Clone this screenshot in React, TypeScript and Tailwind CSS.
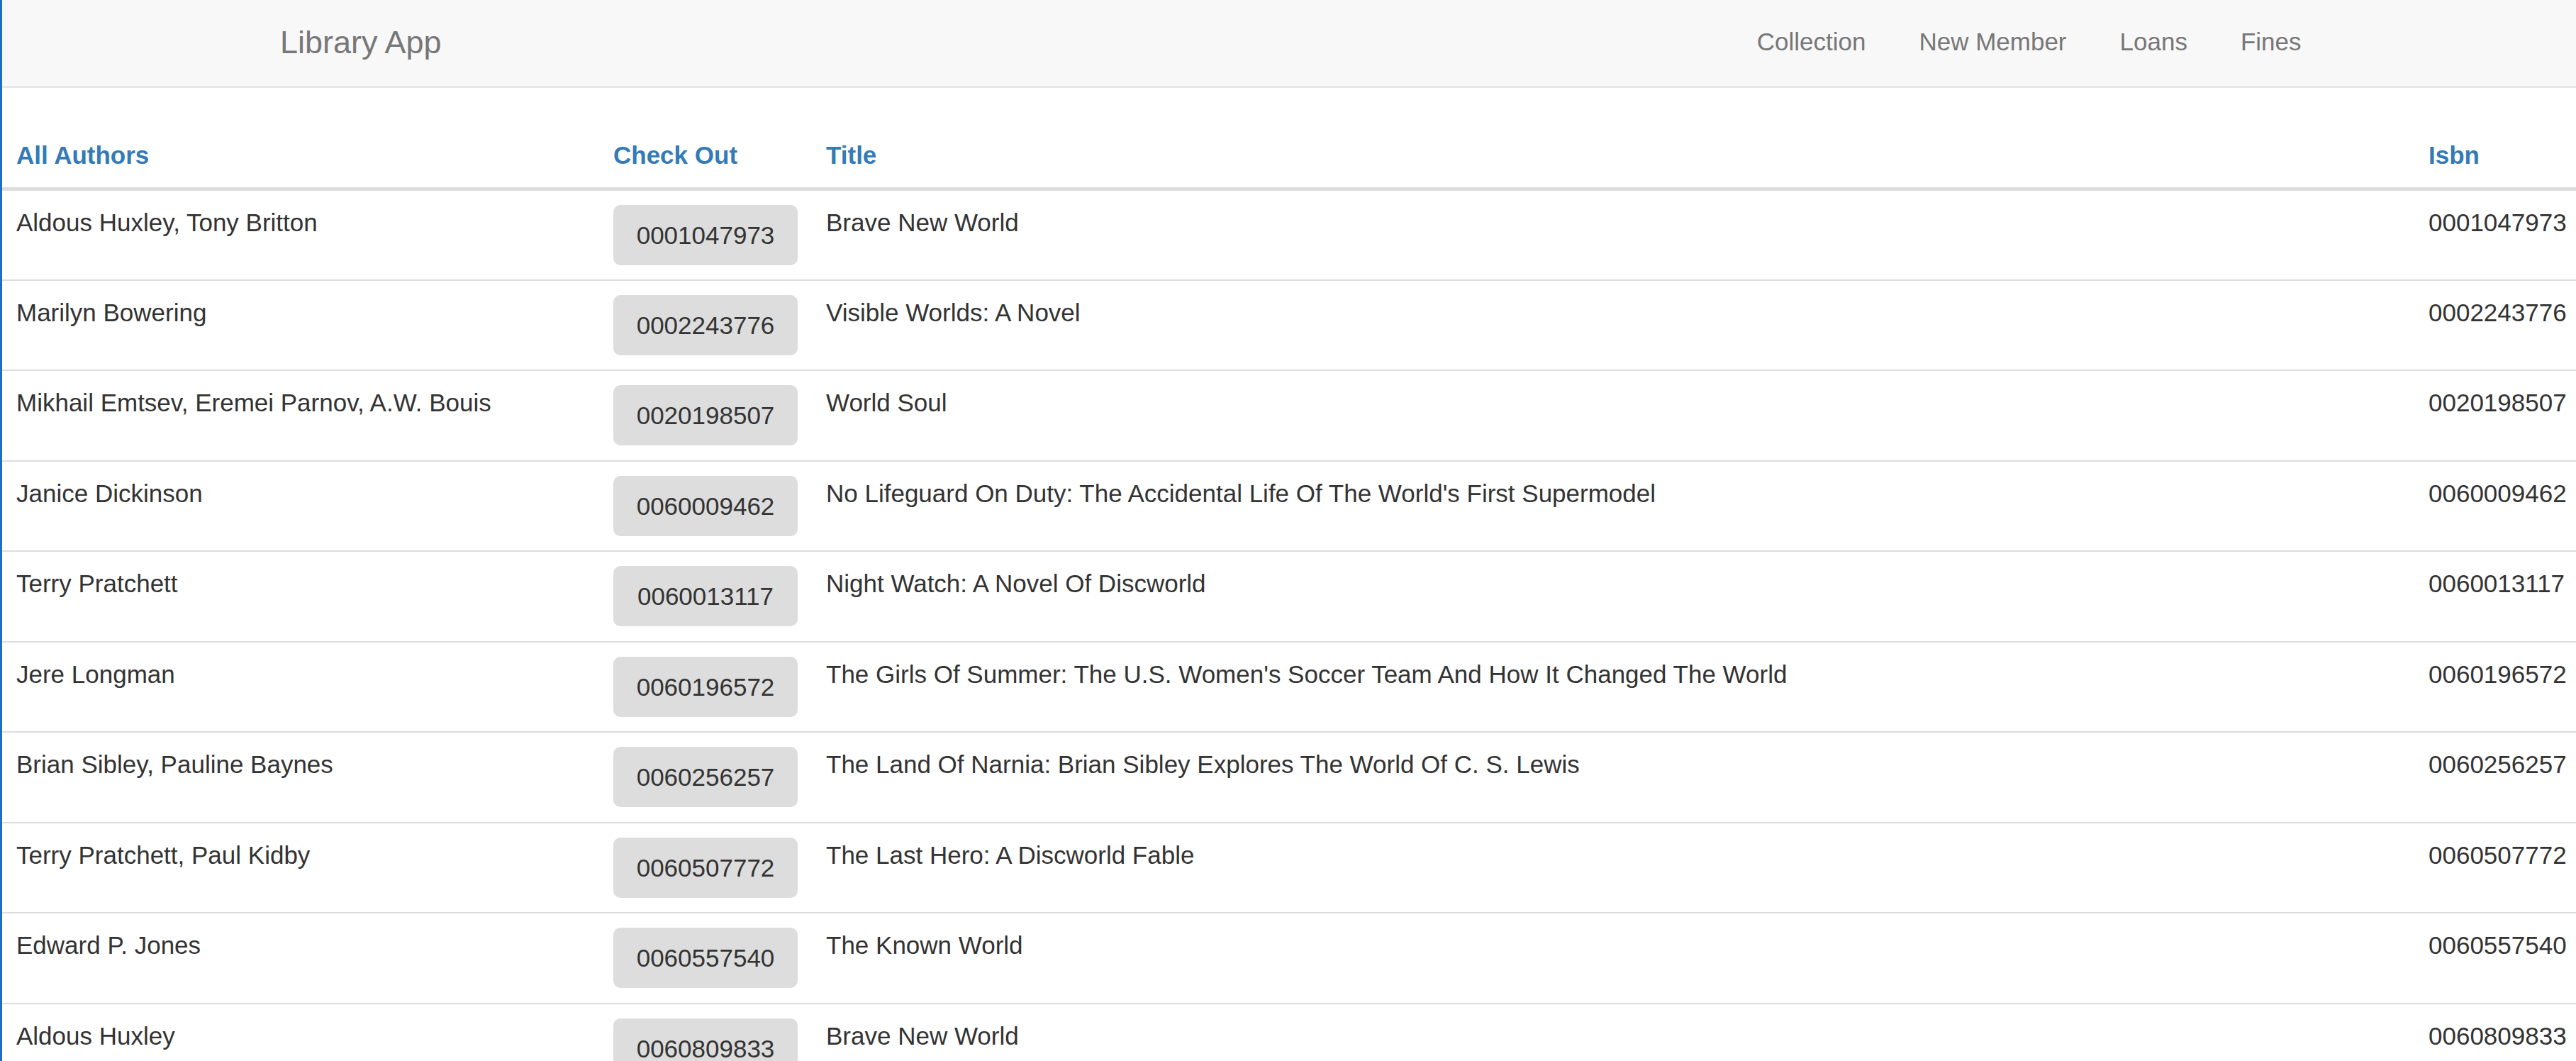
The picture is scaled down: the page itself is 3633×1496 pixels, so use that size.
import React from 'react';

const books = [
  { authors: 'Aldous Huxley, Tony Britton', isbn: '0001047973', title: 'Brave New World' },
  { authors: 'Marilyn Bowering', isbn: '0002243776', title: 'Visible Worlds: A Novel' },
  { authors: 'Mikhail Emtsev, Eremei Parnov, A.W. Bouis', isbn: '0020198507', title: 'World Soul' },
  {
    authors: 'Janice Dickinson',
    isbn: '0060009462',
    title: "No Lifeguard On Duty: The Accidental Life Of The World's First Supermodel",
  },
  { authors: 'Terry Pratchett', isbn: '0060013117', title: 'Night Watch: A Novel Of Discworld' },
  {
    authors: 'Jere Longman',
    isbn: '0060196572',
    title: "The Girls Of Summer: The U.S. Women's Soccer Team And How It Changed The World",
  },
  {
    authors: 'Brian Sibley, Pauline Baynes',
    isbn: '0060256257',
    title: 'The Land Of Narnia: Brian Sibley Explores The World Of C. S. Lewis',
  },
  { authors: 'Terry Pratchett, Paul Kidby', isbn: '0060507772', title: 'The Last Hero: A Discworld Fable' },
  { authors: 'Edward P. Jones', isbn: '0060557540', title: 'The Known World' },
  { authors: 'Aldous Huxley', isbn: '0060809833', title: 'Brave New World' },
];

const navLinks = ['Collection', 'New Member', 'Loans', 'Fines'];

const cols = 'grid grid-cols-[842px_300px_1fr_228px]';

const App = () => {
  return (
    <div
      className="h-[1496px] w-full overflow-hidden bg-white border-l-[3px] border-[#1d6fc6] text-[#333]"
      style={{ fontFamily: '"Liberation Sans", Arial, sans-serif' }}
    >
      {/* navbar */}
      <nav className="h-[124px] bg-[#f8f8f8] border-b-[3px] border-[#e7e7e7] flex items-start pl-[392px] pr-[350px]">
        <a className="text-[45px] leading-[50px] pt-[35px] text-[#777]">Library App</a>
        <ul className="ml-auto flex">
          {navLinks.map((link) => (
            <li key={link} className="px-[37.5px] pt-[34px] text-[35px] leading-[50px] text-[#777]">
              {link}
            </li>
          ))}
        </ul>
      </nav>

      {/* table */}
      <div className="mt-[50px] text-[35px] leading-[50px]">
        <div className={`${cols} border-b-[5px] border-[#ddd] font-bold text-[#337ab7]`}>
          <div className="p-[20px]">All Authors</div>
          <div className="p-[20px]">Check Out</div>
          <div className="p-[20px]">Title</div>
          <div className="pl-[20px] py-[20px]">Isbn</div>
        </div>
        {books.map((book, i) => (
          <div
            key={book.isbn}
            className={`${cols} ${i > 0 ? 'border-t-2 border-[#ddd]' : ''} ${
              i % 2 === 0 && i > 0 ? 'pb-[21px]' : 'pb-[20px]'
            }`}
          >
            <div className="px-[20px] pt-[20px]">{book.authors}</div>
            <div className="px-[20px] pt-[20px]">
              <button className="h-[85px] w-[260px] rounded-[10px] bg-[#ddd] text-[35px] leading-[50px] text-[#333]">
                {book.isbn}
              </button>
            </div>
            <div className="px-[20px] pt-[20px]">{book.title}</div>
            <div className="pl-[20px] pt-[20px]">{book.isbn}</div>
          </div>
        ))}
      </div>
    </div>
  );
};

export default App;
